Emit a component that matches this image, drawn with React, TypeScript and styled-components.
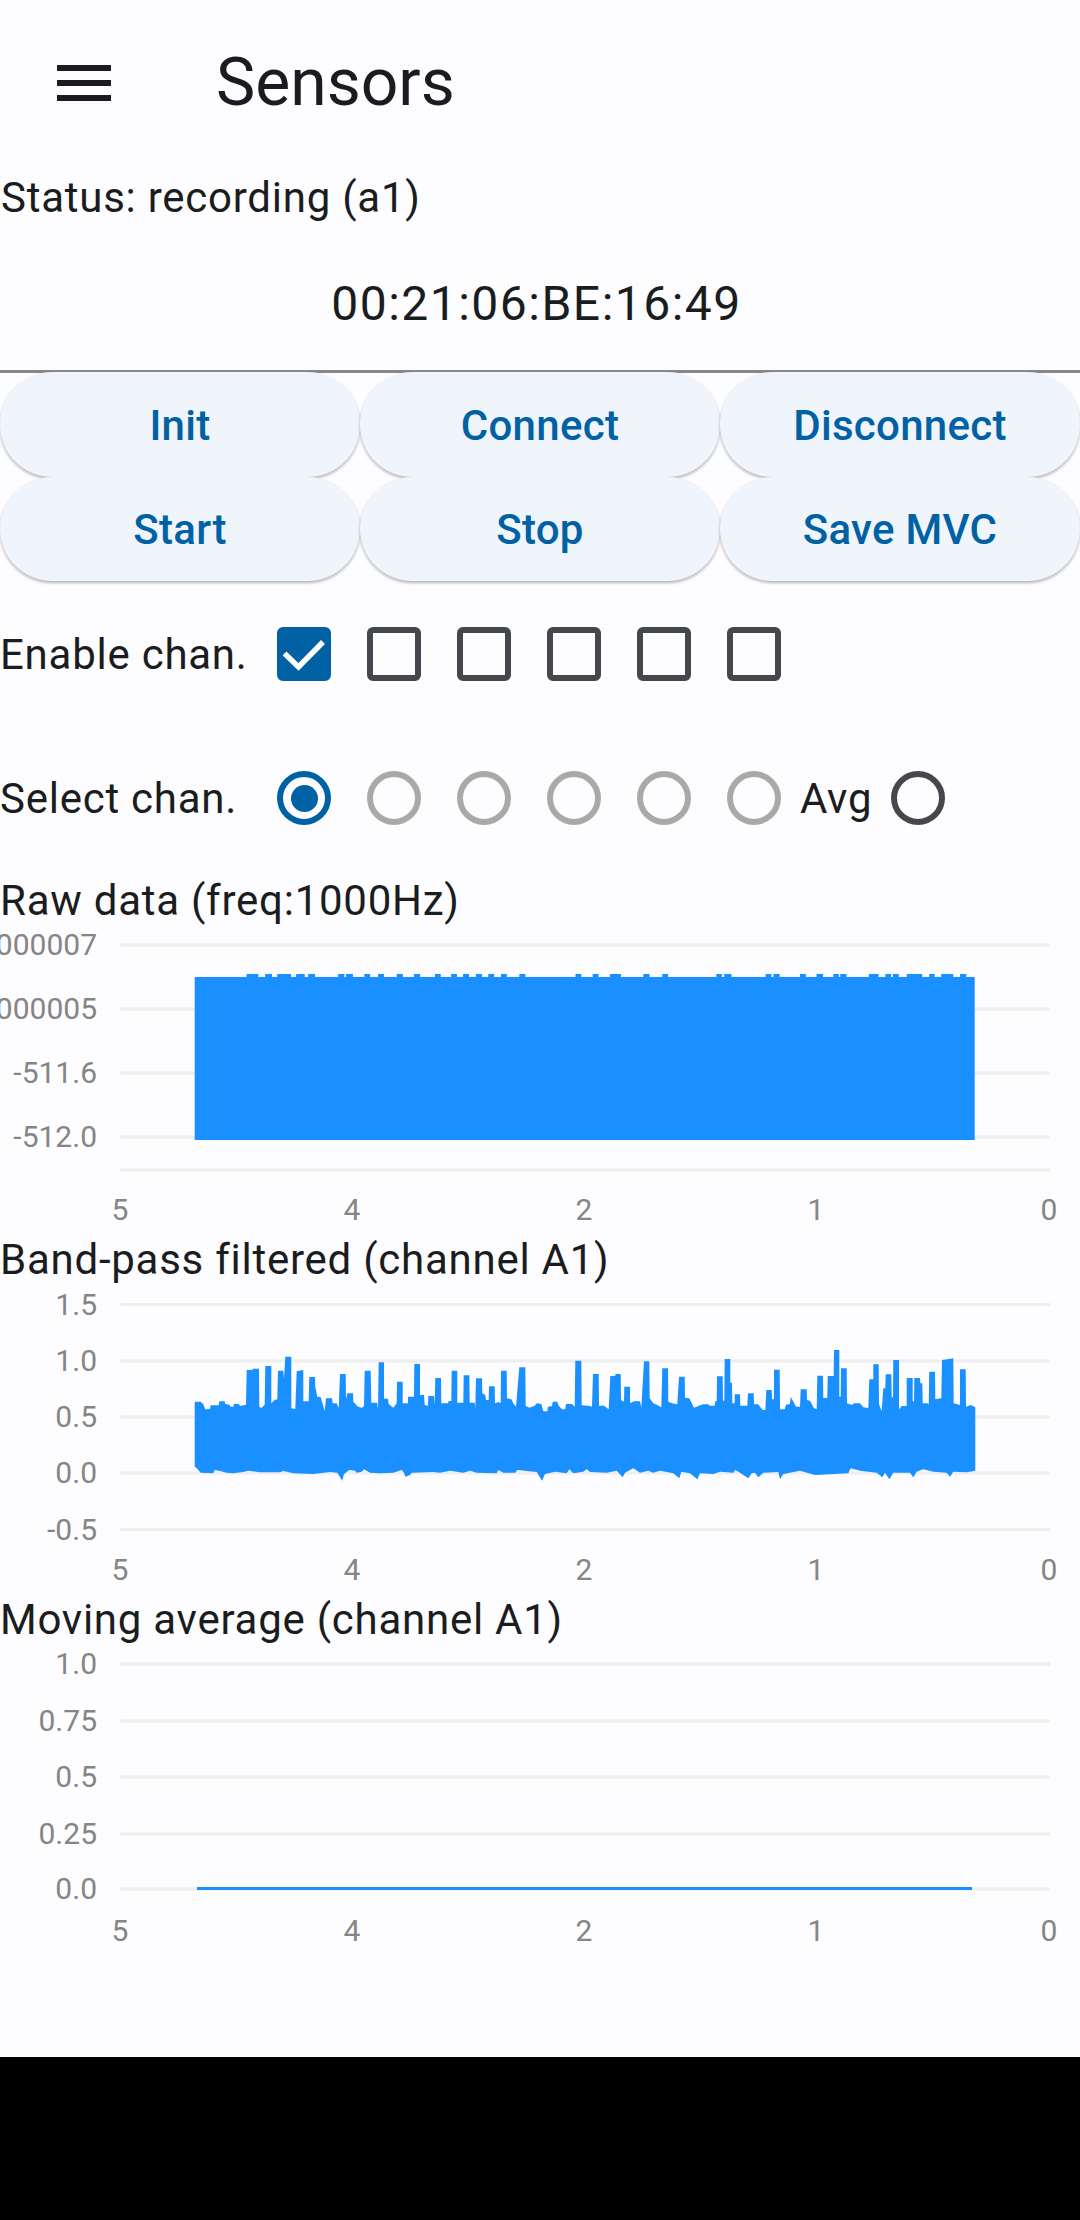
import React from "react";
import styled, { createGlobalStyle } from "styled-components";

const Global = createGlobalStyle`
  html, body { margin: 0; padding: 0; background: #000; }
  body { font-family: Roboto, "Noto Sans", sans-serif; color: #1a1c1e; }
`;

const Screen = styled.div`
  width: 1080px;
  height: 2057px;
  background: #fdfcff;
  overflow: hidden;
`;

const AppBar = styled.header`
  height: 165px;
  display: flex;
  align-items: center;
`;

const MenuButton = styled.div`
  width: 216px;
  padding-left: 57px;
  box-sizing: border-box;
  display: flex;
  align-items: center;
`;

const Title = styled.h1`
  margin: 0;
  font-size: 66px;
  font-weight: 400;
  line-height: 80px;
`;

const StatusLine = styled.div`
  height: 64px;
  display: flex;
  align-items: center;
  padding-left: 1px;
  font-size: 42px;
  letter-spacing: 0.75px;
`;

const MacRow = styled.div`
  height: 144px;
  padding: 8px 7px 0 0;
  box-sizing: border-box;
  display: flex;
  align-items: center;
  justify-content: center;
  font-size: 48px;
  letter-spacing: 1.5px;
  border-bottom: 3px solid #85878a;
`;

const ButtonGrid = styled.div`
  display: grid;
  grid-template-columns: repeat(3, 360px);
  grid-auto-rows: 104.5px;
  margin-top: -1px;
`;

const PillButton = styled.button`
  margin: 0;
  padding: 2px 0 0;
  border: 0;
  border-radius: 52px;
  background: #f0f4fb;
  color: #0061a4;
  font: 500 42px Roboto, sans-serif;
  letter-spacing: 0.3px;
  box-shadow: 0 2px 3px rgba(0, 0, 0, 0.28);
`;

const OptionRow = styled.div<{ $height: number }>`
  height: ${(p) => p.$height}px;
  display: flex;
  align-items: center;
`;

const RowLabel = styled.div`
  width: 277px;
  font-size: 42px;
  letter-spacing: 0.75px;
  flex: none;
`;

const Controls = styled.div`
  display: flex;
  align-items: center;
  gap: 36px;
`;

const CheckBox = styled.div<{ $on?: boolean }>`
  width: 54px;
  height: 54px;
  box-sizing: border-box;
  border-radius: 6px;
  border: 6px solid ${(p) => (p.$on ? "#0061a4" : "#44474e")};
  background: ${(p) => (p.$on ? "#0061a4" : "transparent")};
  display: flex;
  align-items: center;
  justify-content: center;
`;

const Radio = styled.div<{ $color: string; $on?: boolean }>`
  width: 54px;
  height: 54px;
  box-sizing: border-box;
  border-radius: 50%;
  border: 6px solid ${(p) => p.$color};
  display: flex;
  align-items: center;
  justify-content: center;
  &::after {
    content: "";
    display: ${(p) => (p.$on ? "block" : "none")};
    width: 27px;
    height: 27px;
    border-radius: 50%;
    background: ${(p) => p.$color};
  }
`;

const AvgLabel = styled.span`
  font-size: 42px;
  letter-spacing: 0.75px;
  margin: 0 -17px 0 -17px;
  width: 72px;
`;

const SectionTitle = styled.div`
  height: 62px;
  display: flex;
  align-items: center;
  font-size: 42px;
  letter-spacing: 0.75px;
`;

const ChartSvg = styled.svg`
  display: block;
  width: 1080px;
  overflow: hidden;
  text {
    font-family: Roboto, sans-serif;
    font-size: 30px;
    fill: #858585;
  }
  .grid {
    stroke: #eeeeee;
    stroke-width: 3;
  }
  .data {
    fill: #1a8fff;
  }
`;

const BLUE_TOP: [number, number[][]][] = [
  [180, [[44,185],[62,185],[70,193],[76,208],[90,207],[92,196],[116,196],[118,184],[134,184],[136,192],[148,194],[152,200],[160,200],[162,192],[176,192],[180,198],[198,194],[200,90],[218,90],[218,86],[237,86],[238,200],[244,204],[254,194],[256,78],[274,78],[274,190],[284,180],[292,178],[294,92],[310,92],[312,116],[316,50],[334,50],[334,205],[346,207],[350,94],[370,90],[370,184],[386,184],[388,111],[405,111],[406,140],[412,170],[422,172],[434,214],[438,175],[456,175],[458,190],[470,190],[476,205],[480,102],[497,102],[498,178],[502,160],[519,160],[520,185],[534,200],[546,203],[552,198],[554,92],[572,92],[574,188],[592,188],[594,210],[596,67],[612,67],[612,176],[624,176],[626,192],[640,203],[650,190],[651,125],[668,125],[668,190],[684,190],[684,170],[702,170],[703,72],[720,72],[720,165],[732,165],[734,195],[744,197],[745,168],[762,168],[764,195],[766,114],[783,114],[784,190]]],
  [440, [[24,190],[26,183],[34,183],[35,92],[52,92],[52,188],[70,188],[71,106],[88,106],[89,188],[104,188],[106,207],[108,115],[126,115],[127,160],[136,165],[138,180],[146,180],[147,139],[164,139],[165,190],[176,186],[182,190],[183,92],[200,92],[201,175],[214,178],[220,190],[228,200],[238,82],[256,82],[257,198],[268,203],[284,197],[290,190],[304,192],[310,214],[322,214],[324,200],[336,198],[338,185],[352,185],[356,197],[366,208],[376,208],[378,192],[396,192],[404,200],[406,62],[424,62],[425,196],[450,198],[456,200],[459,102],[476,102],[477,197],[492,197],[506,208],[511,108],[526,108],[526,102],[542,102],[543,180],[552,185],[553,140],[570,140],[570,190],[582,184],[600,184],[604,203],[612,64],[628,64],[629,175],[640,190],[656,197],[664,202],[667,85],[684,85],[685,185],[696,190],[712,193],[717,110],[734,110],[735,173],[748,175],[762,203],[770,200]]],
  [700, [[0,196],[10,193],[24,193],[30,197],[44,197],[46,184],[50,184],[51,109],[68,109],[69,184],[73,180],[74,57],[91,57],[91,128],[96,128],[97,190],[104,190],[104,163],[120,163],[121,197],[142,197],[144,160],[161,160],[162,193],[174,193],[188,210],[196,210],[199,150],[215,150],[216,178],[222,178],[222,89],[239,89],[240,208],[254,208],[258,194],[270,192],[272,170],[288,200],[300,200],[302,148],[320,148],[321,180],[330,182],[342,205],[350,207],[352,107],[369,107],[370,174],[382,174],[383,108],[401,108],[402,30],[418,30],[418,170],[422,170],[423,85],[440,85],[441,190],[456,195],[462,190],[480,190],[490,202],[505,204],[508,118],[520,118],[520,73],[536,73],[537,193],[545,214],[550,145],[556,145],[557,103],[574,103],[575,172],[579,172],[580,60],[597,60],[597,208],[606,198],[620,198],[620,114],[638,114],[638,184],[642,184],[643,114],[660,114],[661,130],[667,130],[668,190],[684,190],[686,195],[688,95],[705,95],[706,178],[724,175],[726,60],[742,58],[760,55],[761,190],[780,195],[780,88],[797,88],[798,200],[812,195],[826,202]]],
];

const BLUE_BOTTOM: [number, number[][]][] = [
  [180, [[44,380],[50,385],[62,398],[100,400],[104,390],[120,393],[140,398],[160,400],[190,396],[205,392],[240,397],[300,397],[310,393],[340,400],[400,402],[450,396],[472,398],[487,422],[492,402],[508,390],[525,392],[530,398],[545,395],[552,388],[570,398],[600,400],[640,398],[665,390],[672,398],[676,410],[690,405],[695,398],[760,396],[780,398]]],
  [440, [[30,392],[70,398],[90,392],[110,398],[170,400],[175,390],[190,398],[226,398],[232,390],[290,396],[306,422],[315,402],[345,395],[380,400],[388,388],[400,400],[430,395],[440,388],[450,396],[500,398],[530,392],[548,412],[555,398],[580,385],[600,398],[625,392],[640,398],[660,392],[700,400],[718,415],[724,395],[750,400],[772,418],[780,400]]],
  [700, [[40,402],[60,395],[100,398],[106,390],[120,398],[145,415],[155,400],[165,398],[175,412],[190,398],[235,396],[240,418],[250,402],[300,392],[345,405],[445,400],[452,385],[480,392],[530,398],[547,412],[555,398],[568,418],[580,398],[630,398],[640,412],[650,395],[670,388],[700,395],[740,398],[750,410],[760,395],[800,397],[826,392]]],
];

const RAW_LEFT = [[716,750],[770,790],[805,845],[860,885],[895,915],[982,1000],[1005,1025],[1058,1075],[1098,1115],[1152,1170],[1202,1220],[1263,1280],[1310,1327],[1345,1362],[1382,1400],[1418,1435],[1455,1472],[1508,1526]];
const RAW_RIGHT = [[103,120],[153,170],[203,235],[300,318],[355,372],[512,528],[535,556],[655,672],[678,696],[755,772],[803,822],[852,868],[872,890],[955,983],[1003,1020],[1025,1042],[1065,1110],[1130,1146],[1165,1200],[1220,1238]];

function flatten(segs: [number, number[][]][], top: number) {
  const out: [number, number][] = [];
  let last = -1;
  for (const [offset, pts] of segs) {
    for (const [px, py] of pts) {
      const x = offset + px / 3;
      if (x >= last) {
        out.push([x, 1340 + py / 3 - top]);
        last = x;
      }
    }
  }
  return out;
}

function bandPath(top: number) {
  const upper = flatten(BLUE_TOP, top);
  const lower = flatten(BLUE_BOTTOM, top).reverse();
  return [...upper, ...lower].map(([x, y]) => `${x.toFixed(1)},${y.toFixed(1)}`).join(" ");
}

const X_TICKS: [string, number][] = [["5", 120], ["4", 352], ["2", 584], ["1", 816], ["0", 1049]];

type Tick = { label: string; y: number };

function Chart({ height, ticks, grid, xBase, children }: {
  height: number;
  ticks: Tick[];
  grid: number[];
  xBase: number;
  children: React.ReactNode;
}) {
  return (
    <ChartSvg height={height} viewBox={`0 0 1080 ${height}`}>
      {grid.map((y) => (
        <line key={y} className="grid" x1={120} x2={1050} y1={y} y2={y} />
      ))}
      {ticks.map((t) => (
        <text key={t.label} x={97} y={t.y + 10} textAnchor="end">{t.label}</text>
      ))}
      {X_TICKS.map(([l, x]) => (
        <text key={l} x={x} y={xBase} textAnchor="middle">{l}</text>
      ))}
      {children}
    </ChartSvg>
  );
}

const Menu = () => (
  <svg width="54" height="36" viewBox="0 0 54 36" fill="#1a1c1e">
    <rect x="0" y="0" width="54" height="6" />
    <rect x="0" y="15" width="54" height="6" />
    <rect x="0" y="30" width="54" height="6" />
  </svg>
);

const Check = () => (
  <svg width="42" height="42" viewBox="0 0 42 42" fill="none">
    <path d="M1.5 20.5 L15.5 34 L40 9" stroke="#fff" strokeWidth="5.5" />
  </svg>
);

export default function App() {
  const c1 = 931, c2 = 1290;
  return (
    <>
      <Global />
      <Screen>
        <AppBar>
          <MenuButton><Menu /></MenuButton>
          <Title>Sensors</Title>
        </AppBar>
        <StatusLine>Status: recording (a1)</StatusLine>
        <MacRow>00:21:06:BE:16:49</MacRow>
        <ButtonGrid>
          {["Init", "Connect", "Disconnect", "Start", "Stop", "Save MVC"].map((b) => (
            <PillButton key={b}>{b}</PillButton>
          ))}
        </ButtonGrid>
        <OptionRow $height={146}>
          <RowLabel>Enable chan.</RowLabel>
          <Controls>
            <CheckBox $on><Check /></CheckBox>
            <CheckBox /><CheckBox /><CheckBox /><CheckBox /><CheckBox />
          </Controls>
        </OptionRow>
        <OptionRow $height={142}>
          <RowLabel>Select chan.</RowLabel>
          <Controls>
            <Radio $color="#0061a4" $on />
            <Radio $color="#a9a9a9" />
            <Radio $color="#a9a9a9" />
            <Radio $color="#a9a9a9" />
            <Radio $color="#a9a9a9" />
            <Radio $color="#a9a9a9" />
            <AvgLabel>Avg</AvgLabel>
            <Radio $color="#44474e" />
          </Controls>
        </OptionRow>

        <SectionTitle>Raw data (freq:1000Hz)</SectionTitle>
        <Chart
          height={297}
          grid={[14, 78, 142, 206, 239]}
          xBase={288.5}
          ticks={[
            { label: "-511.20000007", y: 14 },
            { label: "-511.40000005", y: 78 },
            { label: "-511.6", y: 142 },
            { label: "-512.0", y: 206 },
          ]}
        >
          <rect className="data" x={194.7} y={977 - c1} width={780} height={163} />
          {RAW_LEFT.map(([a, b]) => (
            <rect key={`l${a}`} className="data" x={a / 2.904} y={974 - c1} width={(b - a) / 2.904} height={4} />
          ))}
          {RAW_RIGHT.map(([a, b]) => (
            <rect key={`r${a}`} className="data" x={540 + a / 2.904} y={974 - c1} width={(b - a) / 2.904} height={4} />
          ))}
        </Chart>

        <SectionTitle>Band-pass filtered (channel A1)</SectionTitle>
        <Chart
          height={298}
          grid={[14.5, 71, 127, 183, 239.5]}
          xBase={289.5}
          ticks={[
            { label: "1.5", y: 14.5 },
            { label: "1.0", y: 71 },
            { label: "0.5", y: 127 },
            { label: "0.0", y: 183 },
            { label: "-0.5", y: 239.5 },
          ]}
        >
          <polygon className="data" points={bandPath(c2)} />
        </Chart>

        <SectionTitle>Moving average (channel A1)</SectionTitle>
        <Chart
          height={298}
          grid={[14, 71, 127, 184, 239]}
          xBase={290.5}
          ticks={[
            { label: "1.0", y: 14 },
            { label: "0.75", y: 71 },
            { label: "0.5", y: 127 },
            { label: "0.25", y: 184 },
            { label: "0.0", y: 239 },
          ]}
        >
          <rect className="data" x={197} y={237} width={775} height={3} />
        </Chart>
      </Screen>
    </>
  );
}
